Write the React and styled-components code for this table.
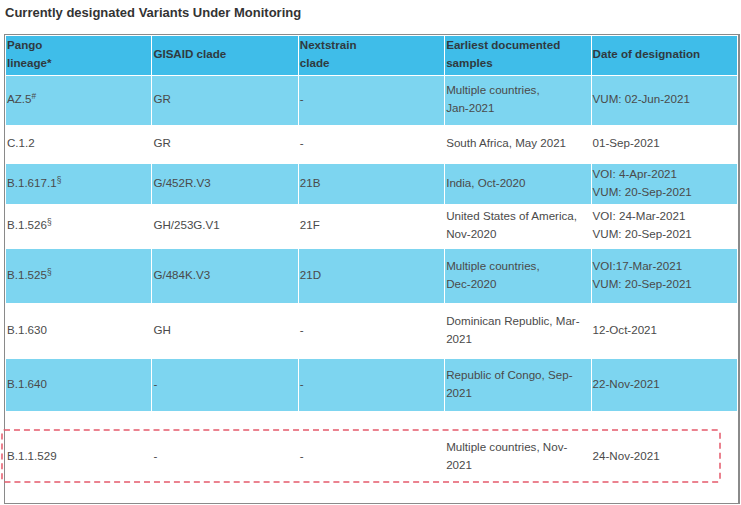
import React from "react";
import styled, { createGlobalStyle } from "styled-components";

const GlobalStyle = createGlobalStyle`
  html, body {
    margin: 0;
    padding: 0;
    background: #ffffff;
  }
  body {
    font-family: "Liberation Sans", Arial, sans-serif;
  }
`;

// Styled Components
const Page = styled.div`
  width: 741px;
  height: 505px;
  padding: 5px 0 0 4px;
  box-sizing: border-box;
  position: relative;
  overflow: hidden;
`;

const Title = styled.h2`
  margin: 0 0 13px 1px;
  font-size: 13px;
  line-height: 16px;
  font-weight: bold;
  color: #333333;
`;

const TableWrap = styled.div`
  position: relative;
`;

const Table = styled.table`
  width: 736px;
  table-layout: fixed;
  border-collapse: separate;
  border-spacing: 1px;
  border: 1px solid #8a8a8a;
  border-right-width: 2px;
  font-size: 11.6px;
  line-height: 18px;
`;

const Row = styled.tr`
  background: ${({ $tone }) =>
    $tone === "head" ? "#3fbde9" : $tone === "blue" ? "#7dd5f0" : "#ffffff"};
`;

// cell heights are content heights, the 3px bottom padding lifts the text a little
const HeadCell = styled.th`
  height: ${({ $h }) => $h - 3}px;
  padding: 0 1px 3px;
  text-align: left;
  vertical-align: middle;
  font-weight: bold;
  color: #2f3a40;
`;

const Cell = styled.td`
  height: ${({ $h }) => $h - 3}px;
  padding: 0 1px 3px;
  vertical-align: middle;
  color: #4a4a4a;
  overflow: hidden;
`;

const Sup = styled.sup`
  font-size: 0.72em;
  line-height: 0;
  vertical-align: 0.45em;
`;

const Highlight = styled.div`
  position: absolute;
  left: -3px;
  top: 395px;
  width: 716px;
  height: 50px;
  border: 2px dashed rgba(228, 88, 106, 0.75);
  border-radius: 3px;
  pointer-events: none;
`;

const headers = [
  ["Pango", "lineage*"],
  ["GISAID clade"],
  ["Nextstrain", "clade"],
  ["Earliest documented", "samples"],
  ["Date of designation"],
];

const rows = [
  { h: 49, tone: "blue", lineage: "AZ.5", mark: "#", gisaid: "GR", next: "-", samples: ["Multiple countries,", "Jan-2021"], date: ["VUM: 02-Jun-2021"] },
  { h: 37, tone: "white", lineage: "C.1.2", gisaid: "GR", next: "-", samples: ["South Africa, May 2021"], date: ["01-Sep-2021"] },
  { h: 40, tone: "blue", lineage: "B.1.617.1", mark: "§", gisaid: "G/452R.V3", next: "21B", samples: ["India, Oct-2020"], date: ["VOI: 4-Apr-2021", "VUM: 20-Sep-2021"] },
  { h: 43, tone: "white", lineage: "B.1.526", mark: "§", gisaid: "GH/253G.V1", next: "21F", samples: ["United States of America,", "Nov-2020"], date: ["VOI: 24-Mar-2021", "VUM: 20-Sep-2021"] },
  { h: 54, tone: "blue", lineage: "B.1.525", mark: "§", gisaid: "G/484K.V3", next: "21D", samples: ["Multiple countries,", "Dec-2020"], date: ["VOI:17-Mar-2021", "VUM: 20-Sep-2021"] },
  { h: 54, tone: "white", lineage: "B.1.630", gisaid: "GH", next: "-", samples: ["Dominican Republic, Mar-", "2021"], date: ["12-Oct-2021"] },
  { h: 52, tone: "blue", lineage: "B.1.640", gisaid: "-", next: "-", samples: ["Republic of Congo, Sep-", "2021"], date: ["22-Nov-2021"] },
  { h: 90, tone: "white", lineage: "B.1.1.529", gisaid: "-", next: "-", samples: ["Multiple countries, Nov-", "2021"], date: ["24-Nov-2021"] },
];

const Lines = ({ lines }) =>
  lines.map((line, i) => (
    <React.Fragment key={i}>
      {i > 0 && <br />}
      {line}
    </React.Fragment>
  ));

const App = () => {
  return (
    <Page>
      <GlobalStyle />
      <Title>Currently designated Variants Under Monitoring</Title>
      <TableWrap>
        <Table>
          <thead>
            <Row $tone="head">
              {headers.map((h, i) => (
                <HeadCell key={i} $h={37}>
                  <Lines lines={h} />
                </HeadCell>
              ))}
            </Row>
          </thead>
          <tbody>
            {rows.map((r) => (
              <Row key={r.lineage} $tone={r.tone}>
                <Cell $h={r.h}>
                  {r.lineage}
                  {r.mark && <Sup>{r.mark}</Sup>}
                </Cell>
                <Cell $h={r.h}>{r.gisaid}</Cell>
                <Cell $h={r.h}>{r.next}</Cell>
                <Cell $h={r.h}>
                  <Lines lines={r.samples} />
                </Cell>
                <Cell $h={r.h}>
                  <Lines lines={r.date} />
                </Cell>
              </Row>
            ))}
          </tbody>
        </Table>
        <Highlight />
      </TableWrap>
    </Page>
  );
};

export default App;
